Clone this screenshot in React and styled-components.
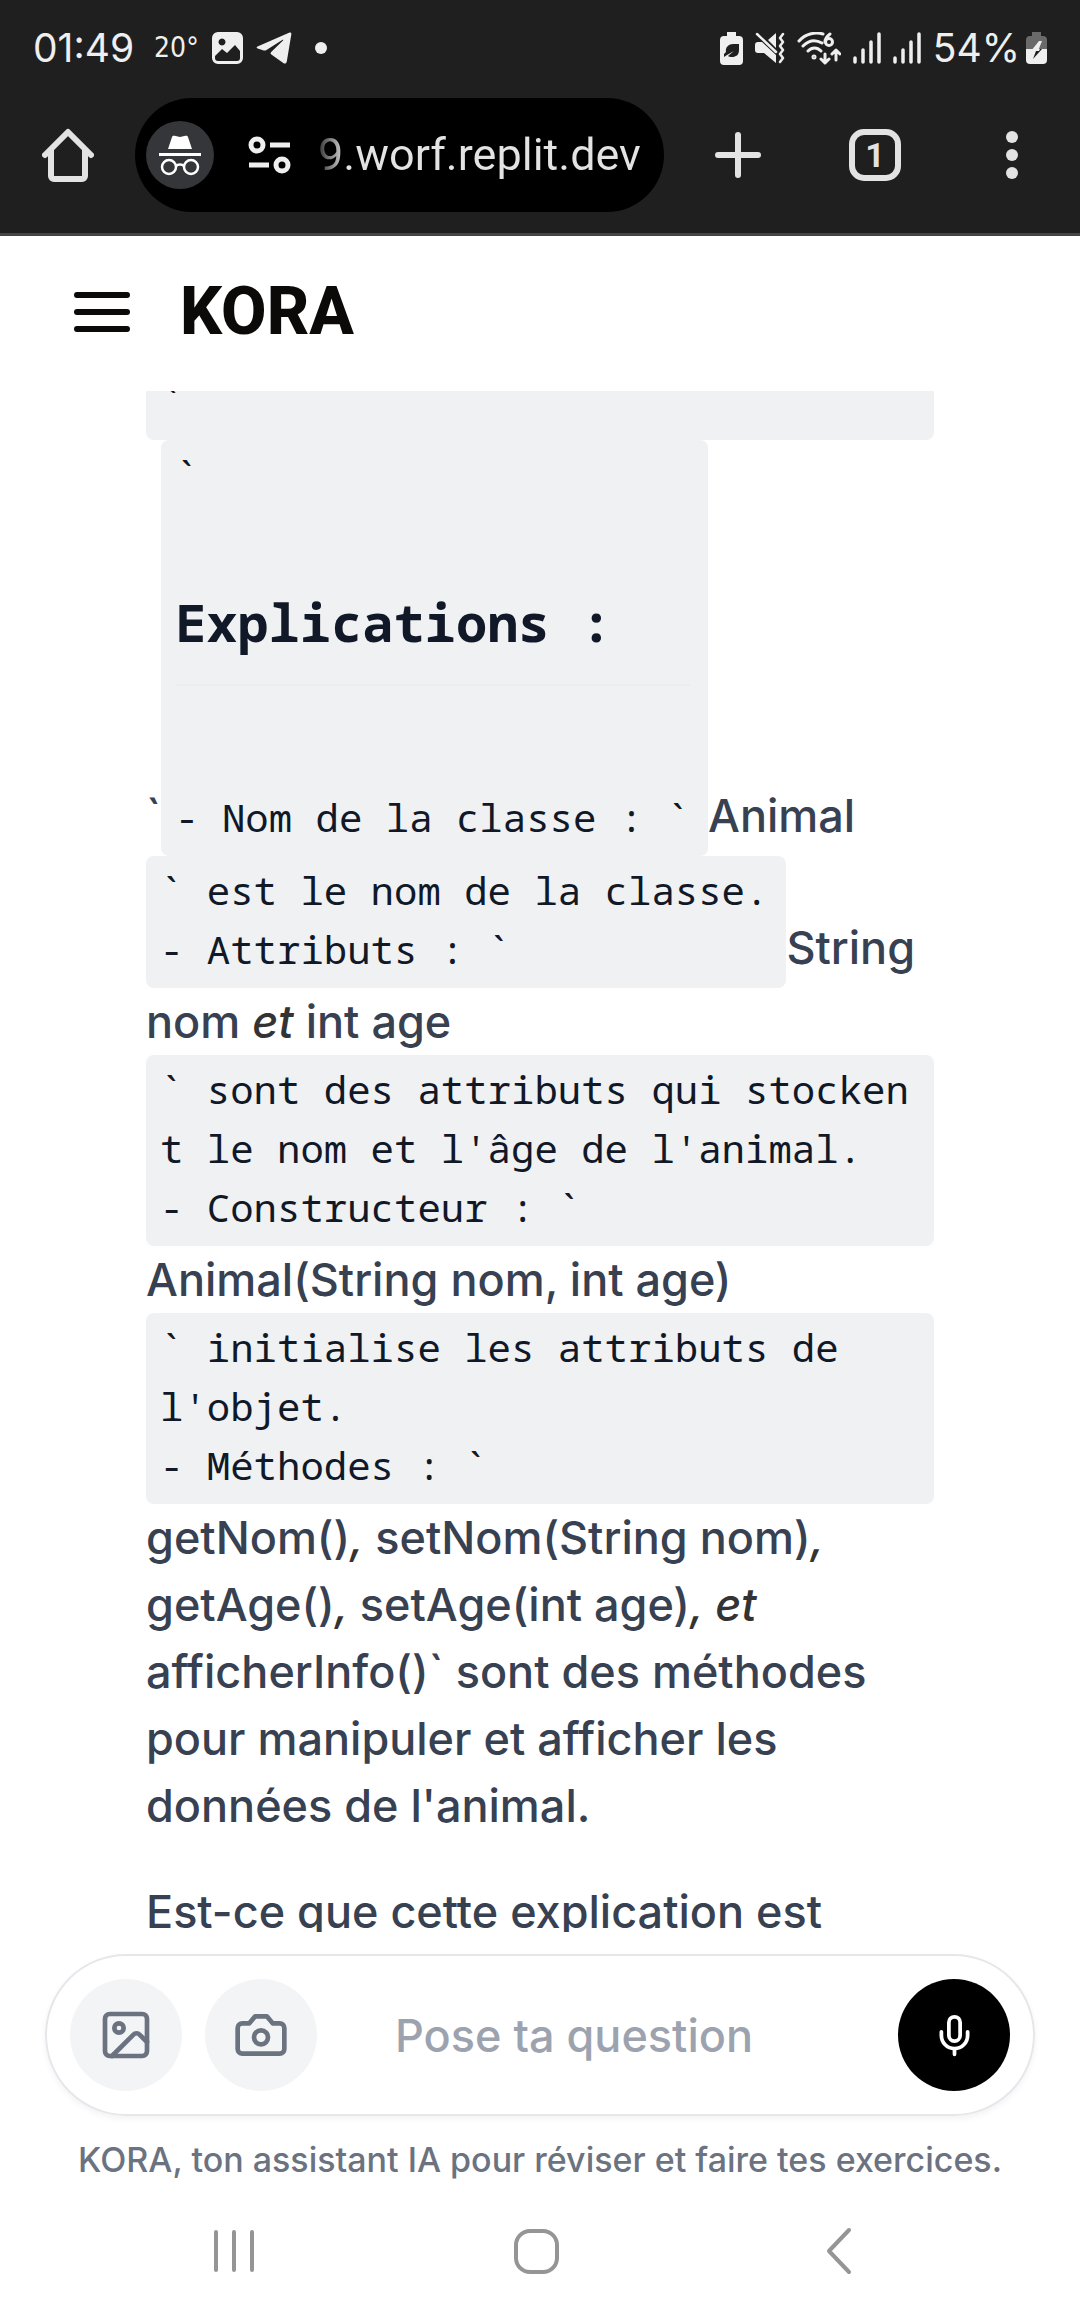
import React from 'react';
import styled, { createGlobalStyle } from 'styled-components';
import { Image as ImageIcon } from 'lucide-react';

const GlobalStyle = createGlobalStyle`
  *, *::before, *::after { box-sizing: border-box; }
  body { margin: 0; background: #fff; font-family: Inter, sans-serif; font-weight: 500; color: #374151; }
  button, input { font: inherit; border: 0; padding: 0; background: none; }
  h1, h2, p { margin: 0; }
  svg { display: block; flex: none; }
`;

const Screen = styled.div`
  display: flex;
  flex-direction: column;
  height: 100vh;
`;

const Chrome = styled.div`
  flex: none;
  background: #1f1f1f;
  border-bottom: 3px solid #464446;
  color: #efefef;
  font-family: Roboto, sans-serif;
  font-weight: 400;
`;

const StatusBar = styled.div`
  display: flex;
  align-items: center;
  justify-content: space-between;
  height: 96px;
  padding: 0 33px;
`;

const StatusGroup = styled.div`
  display: flex;
  align-items: center;
  gap: ${(p) => p.$gap}px;
`;

const Clock = styled.span`
  font-family: Inter, sans-serif;
  font-size: 39px;
  font-weight: 400;
  line-height: 48px;
`;

const Temperature = styled.span`
  font-family: "Liberation Sans Narrow", "DejaVu Sans Condensed", sans-serif;
  font-size: 28px;
  line-height: 48px;
`;

const Toolbar = styled.div`
  display: flex;
  align-items: center;
  height: 137px;
  padding: 0 36px 20px;
  gap: 35px;
`;

const ToolButton = styled.button`
  display: grid;
  place-items: center;
  width: 64px;
  height: 64px;
  color: #e3e3e3;
`;

const ToolGroup = styled.div`
  display: flex;
  flex: none;
  gap: 73px;
  margin-left: 7px;
`;

const Omnibox = styled.div`
  display: flex;
  align-items: center;
  flex: 1;
  min-width: 0;
  height: 114px;
  padding: 0 22px 0 11px;
  border-radius: 57px;
  background: #000;
`;

const IncognitoBadge = styled.span`
  display: grid;
  flex: none;
  place-items: center;
  width: 68px;
  height: 68px;
  margin-right: 34px;
  border-radius: 50%;
  background: #35363a;
`;

const Address = styled.span`
  margin-left: 26px;
  font-size: 45px;
  line-height: 60px;
  background: linear-gradient(90deg, #333 0, #e3e3e3 28px);
  background-clip: text;
  color: transparent;
  white-space: nowrap;
`;

const AppHeader = styled.header`
  display: flex;
  flex: none;
  align-items: center;
  gap: 45px;
  height: 155px;
  padding: 0 68px 4px;
`;

const MenuButton = styled.button`
  display: grid;
  place-items: center;
  width: 67px;
  height: 67px;
  color: #0c0a09;
`;

const Brand = styled.h1`
  font-family: Roboto, sans-serif;
  font-size: 66px;
  font-weight: 800;
  line-height: 80px;
  color: #0c0a09;
`;

const Feed = styled.main`
  flex: 1;
  min-height: 0;
  overflow: hidden;
  padding: 0 146px;
`;

const Message = styled.article`
  margin-top: -25px;
`;

const Paragraph = styled.p`
  margin-bottom: 39px;
  font-size: 45px;
  line-height: 67px;
`;

const Code = styled.code`
  display: inline-block;
  width: ${(p) => (p.$wide ? '100%' : 'auto')};
  max-width: 100%;
  padding: 4px 18px 10px 14px;
  border-radius: 8px;
  background: #eff1f3;
  color: #111827;
  font-family: "Noto Sans Mono", "DejaVu Sans Mono", monospace;
  font-size: 39px;
  font-weight: 400;
  line-height: 59px;
  white-space: pre-wrap;
`;

const SectionTitle = styled.h2`
  margin: 80px 0 101px;
  padding-bottom: 24px;
  border-bottom: 2px solid #ebedef;
  font-size: 52px;
  font-weight: 700;
  line-height: 77px;
`;

const Em = styled.em`
  color: #333;
`;

const Composer = styled.form`
  display: flex;
  flex: none;
  align-items: center;
  gap: 23px;
  height: 162px;
  margin: 22px 45px 0;
  padding: 0 23px;
  border: 2px solid #e5e7eb;
  border-radius: 81px;
  box-shadow: 0 3px 6px rgba(0, 0, 0, 0.05);
`;

const RoundButton = styled.button`
  display: grid;
  flex: none;
  place-items: center;
  width: 112px;
  height: 112px;
  border-radius: 50%;
  background: ${(p) => (p.$dark ? '#000' : '#f3f4f6')};
  color: ${(p) => (p.$dark ? '#fff' : '#6b7280')};
`;

const Question = styled.input`
  flex: 1;
  min-width: 0;
  height: 112px;
  padding: 0 55px;
  font-size: 45px;
  color: #374151;
  outline: none;
  &::placeholder { color: #9ca3af; opacity: 1; }
`;

const Tagline = styled.p`
  flex: none;
  margin-top: 20px;
  font-size: 34px;
  font-weight: 450;
  line-height: 48px;
  text-align: center;
  color: #6b7280;
`;

const SystemNav = styled.nav`
  display: grid;
  flex: none;
  grid-template-columns: repeat(3, 1fr);
  align-items: center;
  height: 132px;
  padding: 2px 91px 0 83px;
`;

const NavButton = styled.button`
  display: grid;
  place-items: center;
  height: 100px;
  color: #959595;
`;

const Stroked = ({ size = 48, width, height, sw = 4, children, box }) => (
  <svg width={width || size} height={height || size} viewBox={box || `0 0 ${width || size} ${height || size}`}
    fill="none" stroke="currentColor" strokeWidth={sw} strokeLinecap="round" strokeLinejoin="round" aria-hidden="true">
    {children}
  </svg>
);

const PhotoGlyph = () => (
  <svg width="31" height="32" viewBox="0 0 31 32" aria-hidden="true">
    <path fillRule="evenodd" fill="currentColor" d="M6 0h19a6 6 0 0 1 6 6v20a6 6 0 0 1-6 6H6a6 6 0 0 1-6-6V6a6 6 0 0 1 6-6ZM10 6.500a3.500 3.500 0 1 0 .01 0ZM3 24v2a3 3 0 0 0 3 3h19a3 3 0 0 0 3-3v-7l-5-6-8 8-5-4Z" />
  </svg>
);

const TelegramGlyph = () => (
  <svg width="36" height="32" viewBox="0 0 36 32" aria-hidden="true">
    <path fill="currentColor" d="M1.500 14.500 33 .8c1.700-.8 2.700.2 2.300 1.800l-4.500 27c-.4 2-1.800 2.600-3.500 1.400l-12-8.500c-1-.8-1-1.500-.1-2.400L27 8.500c.6-.6 0-1-.8-.5L10.500 18c-1 .6-1.800.7-2.800.4l-6-2c-1.400-.5-1.400-1.300-.2-1.900Z" />
  </svg>
);

const SaverGlyph = () => (
  <svg width="23" height="33" viewBox="0 0 23 33" aria-hidden="true">
    <path fill="currentColor" d="M7 0h9v4h3a4 4 0 0 1 4 4v21a4 4 0 0 1-4 4H4a4 4 0 0 1-4-4V8a4 4 0 0 1 4-4h3Z" />
    <path fill="#1f1f1f" d="M19 12v6c0 5-3 7-7 7-2 0-3-.4-4-1l6-5-7 4-3 2v-3l2-2c-1-5 3-8 7-8Z" />
  </svg>
);

const MuteGlyph = () => (
  <svg width="30" height="32" viewBox="0 0 30 32" aria-hidden="true">
    <path fill="currentColor" d="M3 10h4l14 13v8L9 21H3a3 3 0 0 1-3-3v-5a3 3 0 0 1 3-3ZM21 1v15l-8-8Z" />
    <path fill="none" stroke="currentColor" strokeWidth="2.500" strokeLinecap="round" strokeLinejoin="round" d="M2 2l19 18M28 2l-3 4 3 4-3 4 3 4-3 4 3 4-3 4" />
  </svg>
);

const WifiGlyph = () => (
  <Stroked width={44} height={33} sw={3}>
    <path d="M2 9C9 1 19 0 26 2M6 14c6-6 12-7 19-3M11 19c4-4 9-4 13 0" />
    <circle cx="17" cy="25" r="1" />
    <path d="M33 2c-4 3-5 6-5 8" />
    <circle cx="32" cy="10" r="3.500" />
    <path d="M28 22v9m-4-4 4 4 4-4M39 28v-10m-4 4 4-4 4 4" />
  </Stroked>
);

const SignalGlyph = () => (
  <Stroked width={28} height={32} sw={3.5}>
    <path d="M2 26v4M10 18v12M18 10v20M26 2v28" />
  </Stroked>
);

const ChargeGlyph = () => (
  <svg width="21" height="32" viewBox="0 0 21 32" aria-hidden="true">
    <path fill="#6a6a6a" d="M6 0h9v4h2a4 4 0 0 1 4 4v10H0V8a4 4 0 0 1 4-4h2Z" />
    <path fill="currentColor" d="M0 17h21v11a4 4 0 0 1-4 4H4a4 4 0 0 1-4-4Z" />
    <path fill="#efefef" d="m13 9-8 10h7l4-10Z" />
    <path fill="#1f1f1f" d="M16 17 7 27l3-8h3l1-2Z" />
  </svg>
);

const DotGlyph = styled.span`
  width: 12px;
  height: 12px;
  margin-left: 10px;
  border-radius: 50%;
  background: currentColor;
`;

const IncognitoGlyph = () => (
  <svg width="42" height="42" viewBox="0 0 42 42" fill="none" stroke="#fff" strokeWidth="2.500" aria-hidden="true">
    <path fill="#fff" stroke="none" d="m9 15 4-12c.4-1 1.500-1.600 2.600-1.200L21 3l5.400-1.200c1.100-.4 2.200.2 2.600 1.200l4 12ZM0 19h42v3H0Z" />
    <circle cx="10" cy="33" r="7" />
    <circle cx="32" cy="33" r="7" />
    <path d="M17 32c2-2 6-2 8 0" />
  </svg>
);

export default function App() {
  return (
    <Screen>
      <GlobalStyle />
      <Chrome>
        <StatusBar>
          <StatusGroup $gap={20}>
            <Clock>01:49</Clock>
            <StatusGroup $gap={13}>
              <Temperature>20°</Temperature>
              <PhotoGlyph />
              <TelegramGlyph />
              <DotGlyph />
            </StatusGroup>
          </StatusGroup>
          <StatusGroup $gap={12}>
            <SaverGlyph />
            <MuteGlyph />
            <WifiGlyph />
            <SignalGlyph />
            <SignalGlyph />
            <StatusGroup $gap={6}>
              <Clock>54%</Clock>
              <ChargeGlyph />
            </StatusGroup>
          </StatusGroup>
        </StatusBar>
        <Toolbar>
          <ToolButton aria-label="Accueil">
            <Stroked width={52} height={54} sw={6}>
              <path d="M3 27 26 4l23 23M9 22v26a3 3 0 0 0 3 3h28a3 3 0 0 0 3-3V22" />
            </Stroked>
          </ToolButton>
          <Omnibox>
            <IncognitoBadge><IncognitoGlyph /></IncognitoBadge>
            <Stroked width={44} height={38} sw={5}>
              <circle cx="9" cy="9" r="6" />
              <circle cx="34" cy="29" r="6" />
              <path strokeLinecap="butt" d="M22 9h20M1 29h20" />
            </Stroked>
            <Address>9.worf.replit.dev</Address>
          </Omnibox>
          <ToolGroup>
            <ToolButton aria-label="Nouvel onglet">
              <Stroked size={46} sw={6}><path d="M23 3v40M3 23h40" /></Stroked>
            </ToolButton>
            <ToolButton aria-label="Onglets">
              <Stroked size={52} sw={6}>
                <rect x="3" y="3" width="46" height="46" rx="12" />
                <text x="26" y="38" textAnchor="middle" fontSize="34" fontWeight="700" fill="currentColor" stroke="none">1</text>
              </Stroked>
            </ToolButton>
            <ToolButton aria-label="Menu du navigateur">
              <svg width="12" height="48" fill="currentColor" aria-hidden="true">
                <circle cx="6" cy="6" r="6" /><circle cx="6" cy="24" r="6" /><circle cx="6" cy="42" r="6" />
              </svg>
            </ToolButton>
          </ToolGroup>
        </Toolbar>
      </Chrome>

      <AppHeader>
        <MenuButton aria-label="Menu">
          <Stroked width={56} height={42} sw={6}><path d="M3 4h50M3 21h50M3 38h50" /></Stroked>
        </MenuButton>
        <Brand>KORA</Brand>
      </AppHeader>

      <Feed>
        <Message>
          <Paragraph>
            <Code $wide>`</Code>
            {'`'}
            <Code>
              `
              <SectionTitle>Explications :</SectionTitle>
              {'- Nom de la classe : `'}
            </Code>
            Animal{' '}
            <Code>{'` est le nom de la classe.\n- Attributs : `'}</Code>
            String nom <Em>et</Em> int age{' '}
            <Code $wide>{"` sont des attributs qui stocken\nt le nom et l'âge de l'animal.\n- Constructeur : `"}</Code>
            Animal(String nom, int age){' '}
            <Code $wide>{"` initialise les attributs de\nl'objet.\n- Méthodes : `"}</Code>
            getNom()<Em>, </Em>setNom(String nom)<Em>, </Em>getAge()<Em>, </Em>setAge(int age)<Em>, et</Em>{' '}
            afficherInfo()` sont des méthodes pour manipuler et afficher les données de l'animal.
          </Paragraph>
          <Paragraph>Est-ce que cette explication est</Paragraph>
        </Message>
      </Feed>

      <Composer onSubmit={(e) => e.preventDefault()}>
        <RoundButton type="button" aria-label="Ajouter une image"><ImageIcon size={56} /></RoundButton>
        <RoundButton type="button" aria-label="Prendre une photo">
          <Stroked size={56} box="0 0 24 24" sw={2}>
            <path d="M14.500 4h-5L7 7H4a2 2 0 0 0-2 2v9a2 2 0 0 0 2 2h16a2 2 0 0 0 2-2V9a2 2 0 0 0-2-2h-3l-2.500-3z" />
            <circle cx="12" cy="13" r="3" />
          </Stroked>
        </RoundButton>
        <Question type="text" aria-label="Pose ta question" placeholder="Pose ta question" />
        <RoundButton type="button" $dark aria-label="Dicter">
          <Stroked size={45} box="0 0 24 24" sw={2}>
            <path d="M12 2a3 3 0 0 0-3 3v7a3 3 0 0 0 6 0V5a3 3 0 0 0-3-3Z" />
            <path d="M19 10v2a7 7 0 0 1-14 0v-2M12 19v3" />
          </Stroked>
        </RoundButton>
      </Composer>
      <Tagline>KORA, ton assistant IA pour réviser et faire tes exercices.</Tagline>

      <SystemNav aria-label="Navigation système">
        <NavButton aria-label="Applications récentes">
          <Stroked width={42} height={44} sw={4}><path d="M3 3v38M21 3v38M39 3v38" /></Stroked>
        </NavButton>
        <NavButton aria-label="Écran d'accueil">
          <Stroked size={45} sw={4}><rect x="2" y="2" width="41" height="41" rx="14" /></Stroked>
        </NavButton>
        <NavButton aria-label="Retour">
          <Stroked width={27} height={48} sw={4}><path d="M24 3 4 24l20 21" /></Stroked>
        </NavButton>
      </SystemNav>
    </Screen>
  );
}
